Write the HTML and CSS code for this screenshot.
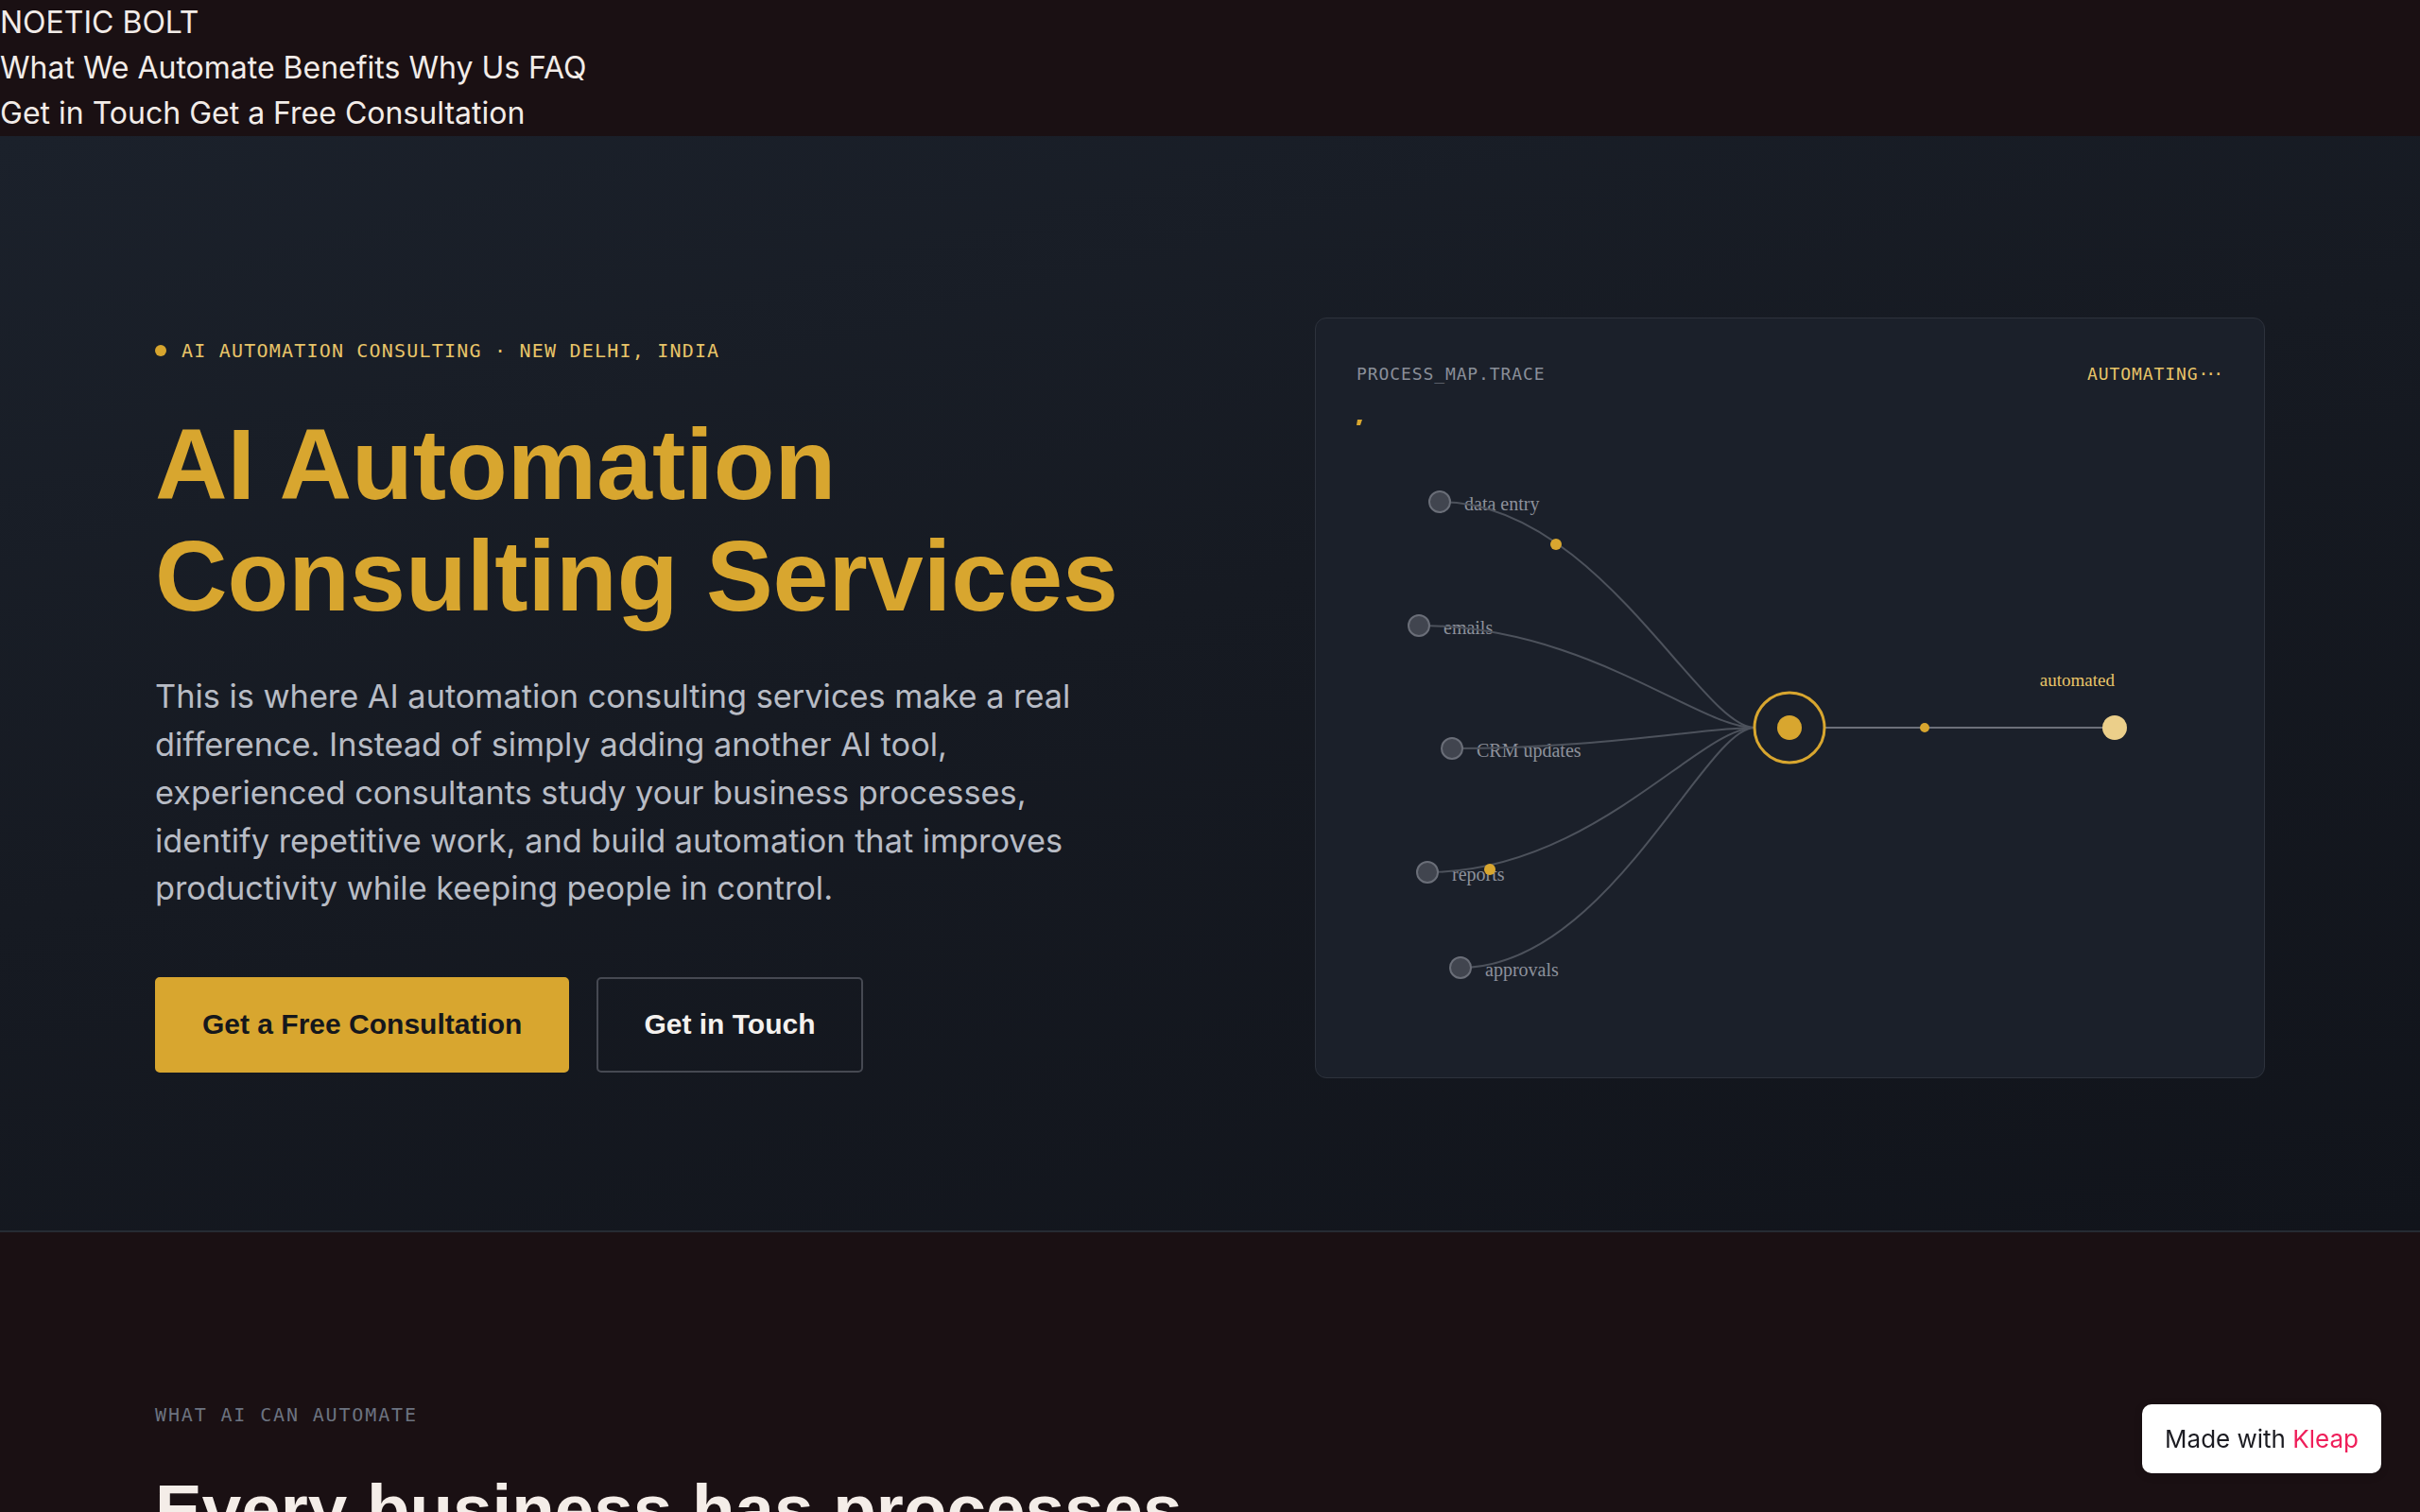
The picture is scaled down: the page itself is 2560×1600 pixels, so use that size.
FILE: index.html
```html
<!DOCTYPE html>
<html lang="en">
<head>
    <meta charset="UTF-8">
    <meta name="viewport" content="width=device-width, initial-scale=1.0">
    <title>AI Automation Consulting Services | Noetic Bolt</title>
    <link rel="stylesheet" href="styles.css">
</head>
<body>

    <header class="site-header">
        <div class="brand"><a href="#">NOETIC BOLT</a></div>
        <nav class="main-nav">
            <a href="#automate">What We Automate</a>
            <a href="#benefits">Benefits</a>
            <a href="#why">Why Us</a>
            <a href="#faq">FAQ</a>
        </nav>
        <div class="header-actions">
            <a href="#contact">Get in Touch</a>
            <a href="#consult">Get a Free Consultation</a>
        </div>
    </header>

    <section class="hero">
        <div class="hero-inner">
            <div class="hero-copy">
                <p class="eyebrow"><span class="eyebrow-dot"></span>AI AUTOMATION CONSULTING · NEW DELHI, INDIA</p>
                <h1>AI Automation Consulting Services</h1>
                <p class="lead">This is where AI automation consulting services make a real difference. Instead of simply adding another AI tool, experienced consultants study your business processes, identify repetitive work, and build automation that improves productivity while keeping people in control.</p>
                <div class="hero-actions">
                    <a class="btn btn-primary" href="#consult">Get a Free Consultation</a>
                    <a class="btn btn-outline" href="#contact">Get in Touch</a>
                </div>
            </div>

            <!-- Process map card -->
            <div class="trace-card">
                <div class="trace-head">
                    <span class="trace-title">PROCESS_MAP.TRACE</span>
                    <span class="trace-status">AUTOMATING<span class="dots">···</span></span>
                </div>
                <svg class="trace-map" width="911" height="685" viewBox="0 0 911 685">
                    <path class="trace-tick" d="M-2 35 L3 35 L1 41 L-3 41 Z"/>

                    <g class="map-labels">
                        <text x="111" y="131">data entry</text>
                        <text x="89" y="262">emails</text>
                        <text x="124" y="392">CRM updates</text>
                        <text x="98" y="523">reports</text>
                        <text x="133" y="624">approvals</text>
                    </g>

                    <g class="map-links">
                        <path d="M85 122 C251 122, 361 361, 418 361"/>
                        <path d="M63 253 C240 253, 358 361, 418 361"/>
                        <path d="M98 383 C258 383, 364 361, 418 361"/>
                        <path d="M72 514 C245 514, 359 361, 418 361"/>
                        <path d="M107 615 C262 615, 365 361, 418 361"/>
                    </g>
                    <line class="map-out" x1="492" y1="361" x2="799" y2="361"/>

                    <g class="map-nodes">
                        <circle cx="85" cy="122" r="11"/>
                        <circle cx="63" cy="253" r="11"/>
                        <circle cx="98" cy="383" r="11"/>
                        <circle cx="72" cy="514" r="11"/>
                        <circle cx="107" cy="615" r="11"/>
                    </g>

                    <circle class="map-token" cx="208" cy="167" r="6"/>
                    <circle class="map-token" cx="138" cy="511" r="6"/>
                    <circle class="map-token" cx="598" cy="361" r="5"/>

                    <circle class="hub-ring" cx="455" cy="361" r="37"/>
                    <circle class="hub-core" cx="455" cy="361" r="13"/>

                    <circle class="map-done" cx="799" cy="361" r="13"/>
                    <text class="done-label" x="799" y="317" text-anchor="end">automated</text>
                </svg>
            </div>
        </div>
    </section>

    <section class="automate" id="automate">
        <p class="section-label">WHAT AI CAN AUTOMATE</p>
        <h2>Every business has processes</h2>
    </section>

    <a class="made-with" href="#">Made with <span>Kleap</span></a>

</body>
</html>
```

FILE: styles.css
```css
/* Base */
body {
    margin: 0;
    font-family: Inter, "Noto Sans", sans-serif;
    font-size: 32px;
    line-height: 1.5;
    background: #1a1013;
    color: #f2ece8;
}

a {
    color: inherit;
    text-decoration: none;
}

/* Top bar (plain links) */
.site-header a {
    color: #f2ece8;
}

/* Hero */
.hero {
    background: linear-gradient(165deg, #1b212b 0%, #161a22 45%, #11141b 100%);
    padding: 192px 164px 161px;
    border-bottom: 2px solid #262b33;
}

.hero-inner {
    display: grid;
    grid-template-columns: minmax(0, 1fr) 1005px;
    gap: 64px;
    align-items: start;
}

.hero-copy {
    padding-top: 22px;
}

.eyebrow {
    display: flex;
    align-items: center;
    gap: 16px;
    margin: 0;
    font-family: "DejaVu Sans Mono", "Liberation Mono", monospace;
    font-size: 20px;
    line-height: 26px;
    letter-spacing: 0.06em;
    color: #e8c468;
}

.eyebrow-dot {
    width: 12px;
    height: 12px;
    border-radius: 50%;
    background: #d7a52e;
}

h1 {
    margin: 48px 0 0;
    font-family: "Liberation Sans", Arial, sans-serif;
    font-size: 106px;
    line-height: 1.115;
    font-weight: 700;
    color: #d8a62f;
}

.lead {
    max-width: 1000px;
    margin: 44px 0 0;
    font-size: 34.3px;
    line-height: 1.48;
    color: #b8bcc5;
}

.hero-actions {
    display: flex;
    gap: 29px;
    margin-top: 68px;
}

.btn {
    padding: 30px 48px 32px;
    border: 2px solid transparent;
    border-radius: 5px;
    font-family: "Liberation Sans", Arial, sans-serif;
    font-size: 30px;
    line-height: 35px;
    font-weight: 700;
}

.btn-primary {
    background: #d8a62f;
    border-color: #d8a62f;
    color: #15171c;
}

.btn-outline {
    border-color: #464952;
    color: #f4f1ee;
}

/* Process map card */
.trace-card {
    background: #1b202a;
    border: 1px solid #2d323c;
    border-radius: 12px;
    padding: 46px;
}

.trace-head {
    display: flex;
    justify-content: space-between;
    font-family: "DejaVu Sans Mono", "Liberation Mono", monospace;
    font-size: 18px;
    line-height: 26px;
    letter-spacing: 0.05em;
}

.trace-title {
    margin-left: -3px;
    color: #8a8f99;
}

.trace-status {
    color: #e8c468;
}

.trace-status .dots {
    letter-spacing: -3px;
}

.trace-map {
    display: block;
    overflow: visible;
}

.trace-tick {
    fill: #d8a62f;
}

.map-labels text {
    font-family: "Liberation Serif", serif;
    font-size: 20px;
    fill: #8d919b;
}

.map-links path {
    fill: none;
    stroke: #4d525c;
    stroke-width: 2;
}

.map-out {
    stroke: #6c707a;
    stroke-width: 2;
}

.map-nodes circle {
    fill: #41454f;
    stroke: #6a6e78;
    stroke-width: 2;
}

.map-token {
    fill: #d8a62f;
}

.hub-ring {
    fill: #1b202a;
    stroke: #d8a62f;
    stroke-width: 3;
}

.hub-core {
    fill: #d8a62f;
}

.map-done {
    fill: #ebcf8a;
}

.done-label {
    font-family: "Liberation Serif", serif;
    font-size: 19px;
    fill: #e8c468;
}

/* What AI can automate */
.automate {
    padding: 180px 164px 120px;
}

.section-label {
    margin: 0;
    font-family: "DejaVu Sans Mono", "Liberation Mono", monospace;
    font-size: 20px;
    line-height: 26px;
    letter-spacing: 1.85px;
    color: #6c7380;
}

h2 {
    margin: 45px 0 0;
    font-family: "Liberation Sans", Arial, sans-serif;
    font-size: 74.6px;
    line-height: 1.15;
    font-weight: 700;
    color: #f4ede8;
}

/* Builder badge */
.made-with {
    position: fixed;
    right: 41px;
    bottom: 41px;
    padding: 20px 24px;
    background: #fff;
    border-radius: 10px;
    box-shadow: 0 2px 10px rgba(0, 0, 0, 0.15);
    font-family: Inter, sans-serif;
    font-size: 26px;
    line-height: 33px;
    color: #1c1c22;
}

.made-with span {
    color: #ef1f5a;
}
```
